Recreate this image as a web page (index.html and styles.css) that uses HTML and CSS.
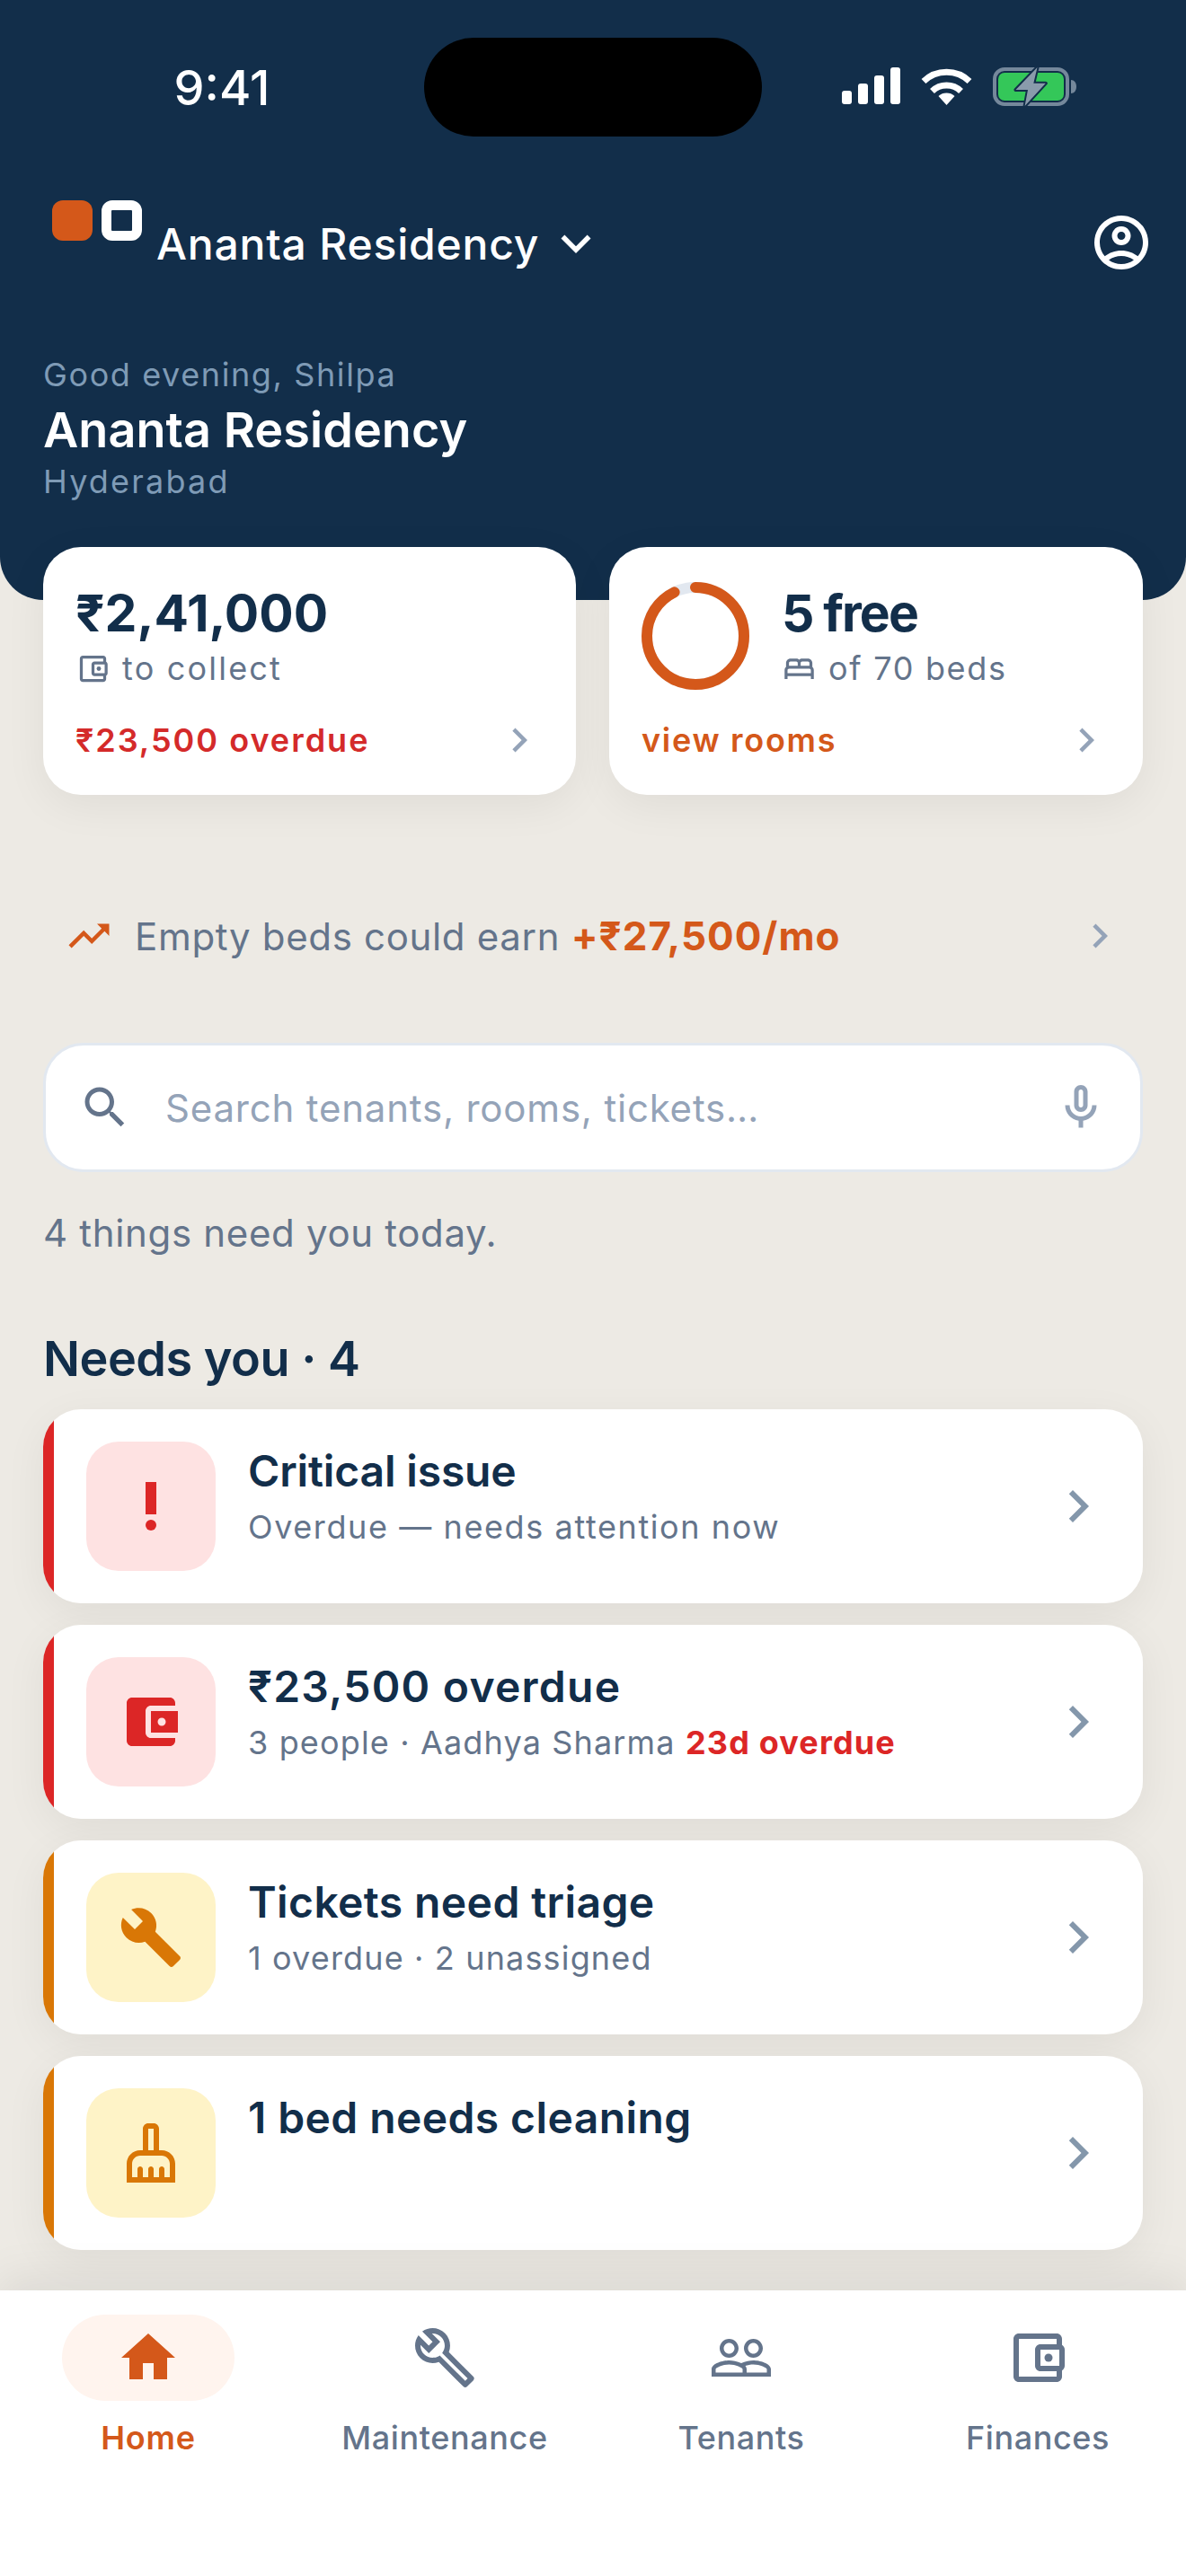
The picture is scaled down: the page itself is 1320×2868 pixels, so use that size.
FILE: index.html
```html
<!DOCTYPE html>
<html lang="en">
<head>
<meta charset="utf-8">
<title>Ananta Residency</title>
<link rel="stylesheet" href="styles.css">
</head>
<body>
<svg class="defs" width="0" height="0">
  <symbol id="chev" viewBox="0 0 24 24"><path d="M10 6L8.59 7.41 13.17 12l-4.58 4.59L10 18l6-6z"/></symbol>
  <symbol id="wallet-o" viewBox="0 0 24 24"><path d="M21 7.28V5c0-1.1-.9-2-2-2H5c-1.11 0-2 .9-2 2v14c0 1.1.89 2 2 2h14c1.1 0 2-.9 2-2v-2.28c.59-.35 1-.98 1-1.72V9c0-.74-.41-1.38-1-1.72zM20 9v6h-7V9h7zM5 19V5h14v2h-6c-1.1 0-2 .9-2 2v6c0 1.1.9 2 2 2h6v2H5z"/><circle cx="16" cy="12" r="1.5"/></symbol>
</svg>
<div class="screen">
  <header class="hero">
    <div class="status">
      <div class="time">9:41</div>
      <div class="island"></div>
      <div class="sys">
        <svg class="signal" width="65" height="41" viewBox="0 0 65 41"><rect x="0" y="26" width="11" height="15" rx="3"/><rect x="18" y="18" width="11" height="23" rx="3"/><rect x="36" y="9" width="11" height="32" rx="3"/><rect x="54" y="0" width="11" height="41" rx="3"/></svg>
        <svg class="wifi" width="57" height="42" viewBox="0 0 57 42"><path class="wifi-arc" d="M3 15.500 A 37 37 0 0 1 54 15.500"/><path class="wifi-arc" d="M12.500 26.500 A 23 23 0 0 1 44.500 26.500"/><path class="wifi-dot" d="M28.500 42 L19.500 32 A 13.500 13.500 0 0 1 37.500 32 Z"/></svg>
        <svg class="battery" width="93" height="43" viewBox="0 0 93 43"><rect class="bat-shell" x="2" y="2" width="81" height="39" rx="11"/><rect class="bat-fill" x="6" y="6" width="73" height="31" rx="7"/><path class="bat-nub" d="M87 14c3.500 0 6 3 6 7.500S90.500 29 87 29z"/><path class="bat-bolt" d="M49.500 0L25.500 25H39L35.600 43 58.800 17.700H45.300z"/></svg>
      </div>
    </div>
    <div class="topbar">
      <div class="logo"><span class="logo-a"></span><span class="logo-b"></span></div>
      <div class="site">Ananta Residency</div>
      <svg class="site-chev" width="66" height="66" viewBox="0 0 24 24"><path d="M16.590 8.590L12 13.170 7.410 8.590 6 10l6 6 6-6z"/></svg>
      <svg class="profile" width="72" height="72" viewBox="0 0 24 24"><path d="M12 2C6.480 2 2 6.480 2 12s4.480 10 10 10 10-4.480 10-10S17.520 2 12 2zM7.350 18.500C8.660 17.560 10.260 17 12 17s3.340.560 4.650 1.500C15.340 19.440 13.740 20 12 20s-3.340-.560-4.650-1.500zm10.790-1.380C16.450 15.800 14.320 15 12 15s-4.450.800-6.140 2.120C4.700 15.730 4 13.950 4 12c0-4.420 3.580-8 8-8s8 3.580 8 8c0 1.950-.700 3.730-1.860 5.120zM12 6c-1.930 0-3.500 1.570-3.500 3.500S10.070 13 12 13s3.500-1.570 3.500-3.500S13.930 6 12 6zm0 5c-.830 0-1.500-.670-1.500-1.500S11.170 8 12 8s1.500.670 1.500 1.500S12.830 11 12 11z"/></svg>
    </div>
    <div class="greet">Good evening, Shilpa</div>
    <h1 class="hero-title">Ananta Residency</h1>
    <div class="city">Hyderabad</div>
  </header>

  <section class="stats">
    <div class="stat">
      <div class="stat-top">
        <div class="stat-body">
          <div class="stat-num num-money">₹2,41,000</div>
          <div class="stat-sub"><svg class="ico-sm" viewBox="0 0 24 24"><use href="#wallet-o"/></svg><span class="sub-collect">to collect</span></div>
        </div>
      </div>
      <div class="stat-foot">
        <span class="foot-red">₹23,500 overdue</span>
        <svg class="chev-sm" viewBox="0 0 24 24"><use href="#chev"/></svg>
      </div>
    </div>
    <div class="stat">
      <div class="stat-top">
        <svg class="ring" width="120" height="120" viewBox="0 0 120 120">
          <circle class="ring-track" cx="60" cy="60" r="54"/>
          <circle class="ring-val" cx="60" cy="60" r="54" pathLength="70" stroke-dasharray="65 70" transform="rotate(-90 60 60)"/>
        </svg>
        <div class="stat-body">
          <div class="stat-num num-free">5 free</div>
          <div class="stat-sub"><svg class="ico-sm" viewBox="0 0 24 24"><path d="M21 10.780V8c0-1.650-1.350-3-3-3h-4c-.770 0-1.470.300-2 .780-.530-.480-1.230-.780-2-.780H6C4.350 5 3 6.350 3 8v2.780c-.610.550-1 1.340-1 2.220v6h2v-2h16v2h2v-6c0-.880-.390-1.670-1-2.220zM14 7h4c.550 0 1 .450 1 1v2h-6V8c0-.550.450-1 1-1zM5 8c0-.550.450-1 1-1h4c.550 0 1 .450 1 1v2H5V8zm-1 7v-2c0-.550.450-1 1-1h14c.550 0 1 .450 1 1v2H4z"/></svg><span class="sub-beds">of 70 beds</span></div>
        </div>
      </div>
      <div class="stat-foot">
        <span class="foot-orange">view rooms</span>
        <svg class="chev-sm" viewBox="0 0 24 24"><use href="#chev"/></svg>
      </div>
    </div>
  </section>

  <div class="upsell">
    <svg class="trend" width="54" height="54" viewBox="0 0 24 24"><path d="M16 6l2.290 2.290-4.880 4.880-4-4L2 16.590 3.410 18l6-6 4 4 6.300-6.290L22 12V6z"/></svg>
    <span class="upsell-text">Empty beds could earn <b class="upsell-amt">+₹27,500/mo</b></span>
    <svg class="chev-sm upsell-chev" viewBox="0 0 24 24"><use href="#chev"/></svg>
  </div>

  <div class="search">
    <svg class="search-ico" width="60" height="60" viewBox="0 0 24 24"><path d="M15.500 14h-.790l-.280-.270C15.410 12.590 16 11.110 16 9.500 16 5.910 13.090 3 9.500 3S3 5.910 3 9.500 5.910 16 9.500 16c1.610 0 3.090-.590 4.230-1.570l.270.280v.790l5 4.990L20.490 19l-4.990-5zm-6 0C7.010 14 5 11.990 5 9.500S7.010 5 9.500 5 14 7.010 14 9.500 11.990 14 9.500 14z"/></svg>
    <span class="search-text">Search tenants, rooms, tickets…</span>
    <svg class="mic-ico" width="60" height="60" viewBox="0 0 24 24"><path d="M12 14c1.660 0 3-1.340 3-3V5c0-1.660-1.340-3-3-3S9 3.340 9 5v6c0 1.660 1.340 3 3 3zm-1-9c0-.550.450-1 1-1s1 .450 1 1v6c0 .550-.450 1-1 1s-1-.450-1-1V5zm6 6c0 2.760-2.240 5-5 5s-5-2.240-5-5H5c0 3.530 2.610 6.430 6 6.920V21h2v-3.080c3.390-.490 6-3.390 6-6.920h-2z"/></svg>
  </div>

  <p class="today">4 things need you today.</p>
  <h2 class="section">Needs you · 4</h2>

  <div class="rows">
    <div class="row row-red">
      <div class="tile tile-red"><svg width="72" height="72" viewBox="0 0 24 24"><circle cx="12" cy="19" r="2"/><path d="M10 3h4v12h-4z"/></svg></div>
      <div class="row-text">
        <div class="row-title title-tight">Critical issue</div>
        <div class="row-sub sub-wide">Overdue — needs attention now</div>
      </div>
      <svg class="row-chev" width="72" height="72" viewBox="0 0 24 24"><use href="#chev"/></svg>
    </div>
    <div class="row row-red">
      <div class="tile tile-red"><svg width="72" height="72" viewBox="0 0 24 24"><path d="M21 18v1c0 1.100-.900 2-2 2H5c-1.110 0-2-.900-2-2V5c0-1.100.890-2 2-2h14c1.100 0 2 .900 2 2v1h-9c-1.110 0-2 .900-2 2v8c0 1.100.890 2 2 2h9zm-9-2h10V8H12v8zm4-2.500c-.830 0-1.500-.670-1.500-1.500s.670-1.500 1.500-1.500 1.500.670 1.500 1.500-.670 1.500-1.500 1.500z"/></svg></div>
      <div class="row-text">
        <div class="row-title title-money">₹23,500 overdue</div>
        <div class="row-sub">3 people · Aadhya Sharma <b class="row-alert">23d overdue</b></div>
      </div>
      <svg class="row-chev" width="72" height="72" viewBox="0 0 24 24"><use href="#chev"/></svg>
    </div>
    <div class="row row-amber">
      <div class="tile tile-amber"><svg width="72" height="72" viewBox="0 0 24 24"><path d="M22.700 19l-9.100-9.100c.900-2.300.400-5-1.500-6.900-2-2-5-2.400-7.400-1.300L9 6 6 9 1.600 4.700C.400 7.100.900 10.100 2.900 12.100c1.900 1.900 4.600 2.400 6.900 1.500l9.100 9.100c.400.400 1 .400 1.400 0l2.300-2.300c.500-.400.500-1.100.100-1.400z"/></svg></div>
      <div class="row-text">
        <div class="row-title title-triage">Tickets need triage</div>
        <div class="row-sub">1 overdue · 2 unassigned</div>
      </div>
      <svg class="row-chev" width="72" height="72" viewBox="0 0 24 24"><use href="#chev"/></svg>
    </div>
    <div class="row row-amber">
      <div class="tile tile-amber"><svg width="72" height="72" viewBox="0 0 24 24"><path d="M16 11h-1V3c0-1.100-.900-2-2-2h-2c-1.100 0-2 .900-2 2v8H8c-2.760 0-5 2.240-5 5v7h18v-7c0-2.760-2.240-5-5-5zm-5-8h2v8h-2V3zm8 18h-2v-3c0-.550-.450-1-1-1s-1 .450-1 1v3h-2v-3c0-.550-.450-1-1-1s-1 .450-1 1v3H9v-3c0-.550-.450-1-1-1s-1 .450-1 1v3H5v-5c0-1.650 1.350-3 3-3h8c1.650 0 3 1.350 3 3v5z"/></svg></div>
      <div class="row-text">
        <div class="row-title title-triage">1 bed needs cleaning</div>
      </div>
      <svg class="row-chev" width="72" height="72" viewBox="0 0 24 24"><use href="#chev"/></svg>
    </div>
  </div>

  <nav class="nav">
    <div class="nav-item nav-active">
      <div class="nav-ico"><svg width="72" height="72" viewBox="0 0 24 24"><path d="M10 20v-6h4v6h5v-8h3L12 3 2 12h3v8z"/></svg></div>
      <span class="nav-label">Home</span>
    </div>
    <div class="nav-item">
      <div class="nav-ico"><svg width="72" height="72" viewBox="0 0 24 24"><path d="M22.610 18.990l-9.080-9.080c.930-2.340.450-5.100-1.440-7C9.790.610 6.210.400 3.660 2.260L7.500 6.110 6.080 7.520 2.250 3.690C.390 6.230.600 9.820 2.900 12.110c1.860 1.860 4.570 2.350 6.890 1.480l9.110 9.110c.390.390 1.020.390 1.410 0l2.300-2.300c.400-.380.400-1.010 0-1.410zm-3 1.600l-9.460-9.460c-.610.450-1.290.720-2 .820-1.360.200-2.790-.210-3.830-1.250C3.370 9.760 2.930 8.500 3 7.260l3.090 3.090 4.240-4.240-3.090-3.090c1.240-.070 2.490.370 3.440 1.310 1.080 1.080 1.490 2.570 1.240 3.960-.120.710-.420 1.370-.880 1.960l9.450 9.450-.880.880z"/></svg></div>
      <span class="nav-label">Maintenance</span>
    </div>
    <div class="nav-item">
      <div class="nav-ico"><svg width="72" height="72" viewBox="0 0 24 24"><path fill-rule="evenodd" d="M16.500 13c-1.200 0-3.070.340-4.500 1-1.430-.670-3.300-1-4.500-1C5.330 13 1 14.080 1 16.250V19h22v-2.750c0-2.170-4.330-3.250-6.500-3.250zm-4 4.500h-10v-1.250c0-.540 2.560-1.750 5-1.750s5 1.210 5 1.750v1.250zm9 0H14v-1.250c0-.460-.200-.860-.520-1.220.880-.300 1.960-.530 3.020-.530 2.440 0 5 1.210 5 1.750v1.250zM7.500 12c1.930 0 3.500-1.570 3.500-3.500S9.430 5 7.500 5 4 6.570 4 8.500 5.570 12 7.500 12zm0-5.500c1.100 0 2 .900 2 2s-.900 2-2 2-2-.900-2-2 .900-2 2-2zm9 5.500c1.930 0 3.500-1.570 3.500-3.500S18.430 5 16.500 5 13 6.570 13 8.500s1.570 3.500 3.500 3.500zm0-5.500c1.100 0 2 .900 2 2s-.900 2-2 2-2-.900-2-2 .900-2 2-2z"/></svg></div>
      <span class="nav-label">Tenants</span>
    </div>
    <div class="nav-item">
      <div class="nav-ico"><svg width="72" height="72" viewBox="0 0 24 24"><use href="#wallet-o"/></svg></div>
      <span class="nav-label">Finances</span>
    </div>
  </nav>
</div>
</body>
</html>
```

FILE: styles.css
```css
* { box-sizing: border-box; }
html, body { margin: 0; padding: 0; }
body {
  width: 1320px;
  height: 2868px;
  overflow: hidden;
  background: #edeae4;
  font-family: Inter, "Noto Sans", sans-serif;
  color: #122e4a;
}
.defs { display: block; height: 0; }
.screen { width: 1320px; height: 2868px; display: flex; flex-direction: column; }

/* hero */
.hero {
  height: 668px;
  padding-top: 42px;
  background: #122e4a;
  border-radius: 0 0 48px 48px;
  color: #fff;
  flex: none;
}
.status { display: grid; grid-template-columns: 472px 376px 472px; height: 110px; align-items: center; }
.time { font-size: 54px; font-weight: 500; text-align: center; padding-left: 22px; }
.island { height: 110px; background: #000; border-radius: 55px; }
.sys { display: flex; align-items: flex-start; height: 110px; padding: 33px 0 0 89px; }
.signal { fill: #fff; flex: none; }
.wifi { margin-left: 23px; flex: none; }
.wifi-arc { fill: none; stroke: #fff; stroke-width: 7; }
.wifi-dot { fill: #fff; }
.battery { margin-left: 23px; flex: none; }
.bat-shell { fill: none; stroke: #75889b; stroke-width: 4; }
.bat-fill { fill: #34c759; }
.bat-nub { fill: #75889b; }
.bat-bolt { fill: #8a9bab; stroke: #122e4a; stroke-width: 4; paint-order: stroke; stroke-linejoin: round; }

.topbar { display: flex; align-items: flex-start; margin-top: 71px; padding: 0 36px 0 58px; height: 83px; }
.logo { display: flex; gap: 10px; flex: none; }
.logo-a, .logo-b { display: block; width: 45px; height: 45px; border-radius: 12px; }
.logo-a { background: #d4581a; }
.logo-b { border: 11.5px solid #fff; }
.site { font-size: 48px; line-height: 60px; font-weight: 500; margin: 19px 0 0 16px; letter-spacing: .8px; }
.site-chev { fill: #fff; margin: 15px 0 0 8px; flex: none; }
.profile { fill: #fff; margin: 11px 0 0 auto; flex: none; }

.greet { font-size: 36px; line-height: 48px; margin: 87px 0 0 48px; color: #7f9bb6; letter-spacing: 1.6px; }
.hero-title { font-size: 54px; line-height: 60px; font-weight: 600; margin: 8px 0 0 48px; letter-spacing: .05px; }
.city { font-size: 36px; line-height: 48px; margin: 3px 0 0 48px; color: #7f9bb6; letter-spacing: 2.2px; }

/* stat cards */
.stats { display: grid; grid-template-columns: 593px 594px; gap: 37px; margin: -59px 48px 0; flex: none; }
.stat {
  height: 276px;
  padding: 36px 36px 34px;
  background: #fff;
  border-radius: 42px;
  box-shadow: 0 12px 48px rgba(0, 0, 0, .06);
  display: flex;
  flex-direction: column;
}
.stat-top { display: flex; gap: 36px; height: 123px; }
.ring { margin-top: 3px; flex: none; }
.ring-track { fill: none; stroke: #e2e8f0; stroke-width: 12; }
.ring-val { fill: none; stroke: #d4581a; stroke-width: 12; stroke-linecap: round; }
.stat-num { font-size: 57px; line-height: 75px; font-weight: 700; }
.num-free { letter-spacing: -1.9px; }
.stat-sub { display: flex; align-items: center; height: 48px; font-size: 36px; color: #64748b; gap: 13px; fill: #64748b; }
.sub-collect { letter-spacing: 2.2px; }
.sub-beds { letter-spacing: 1.7px; }
.ico-sm { width: 39px; height: 39px; flex: none; }
.stat-foot { display: flex; justify-content: space-between; align-items: center; height: 54px; margin-top: 29px; font-size: 36px; font-weight: 600; }
.foot-red { color: #d42a2a; letter-spacing: 2px; }
.foot-orange { color: #d4581a; letter-spacing: 1.7px; }
.chev-sm { width: 54px; height: 54px; fill: #94a3b8; flex: none; }

/* upsell */
.upsell { display: flex; align-items: center; height: 60px; margin: 127px 69px 0 72px; flex: none; }
.trend { fill: #d4581a; flex: none; }
.upsell-text { font-size: 42px; color: #64748b; margin-left: 24px; letter-spacing: .67px; }
.upsell-amt { color: #d4581a; font-weight: 700; font-size: 44px; letter-spacing: 1px; }
.upsell-chev { margin-left: auto; }

/* search */
.search {
  display: flex;
  align-items: center;
  height: 144px;
  margin: 89px 48px 0;
  padding: 0 36px;
  background: #fff;
  border: 3px solid #e2e8f0;
  border-radius: 45px;
  flex: none;
}
.search-ico { fill: #64748b; flex: none; }
.search-text { font-size: 42px; color: #94a3b8; margin-left: 37px; letter-spacing: .8px; }
.mic-ico { fill: #94a3b8; margin-left: auto; flex: none; }

.today { margin: 38px 0 0 48px; font-size: 42px; line-height: 60px; color: #64748b; letter-spacing: .67px; flex: none; }
.section { margin: 77px 0 23px 48px; font-size: 54px; line-height: 66px; font-weight: 600; letter-spacing: -0.5px; flex: none; }

/* rows */
.rows { display: flex; flex-direction: column; gap: 24px; margin: 0 48px; flex: none; }
.row {
  display: flex;
  align-items: flex-start;
  height: 216px;
  padding: 36px 36px 36px 48px;
  border-radius: 42px;
  box-shadow: 0 12px 48px rgba(0, 0, 0, .06);
}
.row-red { background: linear-gradient(to right, #dc2626 12px, #fff 12px); }
.row-amber { background: linear-gradient(to right, #d97706 12px, #fff 12px); }
.tile { width: 144px; height: 144px; border-radius: 36px; display: flex; align-items: center; justify-content: center; flex: none; }
.tile-red { background: #fee2e2; fill: #dc2626; }
.tile-amber { background: #fef3c7; fill: #d97706; }
.row-text { margin: 3px 0 0 36px; }
.row-title { font-size: 48px; line-height: 60px; font-weight: 600; }
.title-tight { letter-spacing: -.15px; }
.title-money { letter-spacing: 1.25px; }
.title-triage { letter-spacing: .4px; }
.row-sub { font-size: 36px; line-height: 48px; margin-top: 8px; color: #64748b; letter-spacing: 1.15px; }
.sub-wide { letter-spacing: 1.6px; }
.row-alert { color: #dc2626; font-weight: 700; }
.row-chev { fill: #8497ab; margin-left: auto; align-self: center; flex: none; }

/* nav */
.nav {
  display: grid;
  grid-template-columns: repeat(4, 330px);
  height: 318px;
  margin-top: 45px;
  padding-top: 27px;
  background: #fff;
  box-shadow: 0 -12px 48px rgba(0, 0, 0, .08);
  flex: none;
}
.nav-item { display: flex; flex-direction: column; align-items: center; fill: #64748b; color: #64748b; }
.nav-ico { width: 192px; height: 96px; border-radius: 48px; display: flex; align-items: center; justify-content: center; }
.nav-label { font-size: 36px; line-height: 48px; margin-top: 17px; font-weight: 500; letter-spacing: .6px; }
.nav-active { fill: #d4581a; color: #d4581a; }
.nav-active .nav-ico { background: #fff4ee; }
.nav-active .nav-label { font-weight: 600; letter-spacing: .8px; }
```
